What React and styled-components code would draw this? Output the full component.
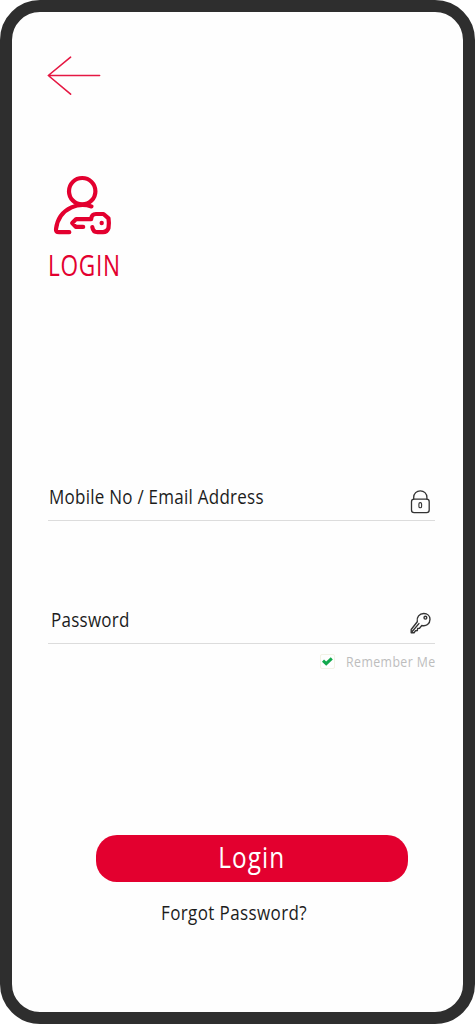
import React, { useState } from "react";
import styled, { createGlobalStyle } from "styled-components";

const GlobalStyle = createGlobalStyle`
  * {
    box-sizing: border-box;
  }
  body {
    margin: 0;
    background: #fff;
    font-family: "Open Sans", "Noto Sans", sans-serif;
  }
`;

const Phone = styled.main`
  width: 475px;
  height: 1024px;
  padding: 44px 28px 0 35px;
  display: flex;
  flex-direction: column;
  align-items: flex-start;
  border: 12px solid #2e2e2e;
  border-radius: 40px;
  background: #fefefe;
  overflow: hidden;
`;

const BackButton = styled.button`
  width: 54px;
  height: 40px;
  padding: 0;
  border: 0;
  background: none;
  cursor: pointer;
`;

const Icon = styled.svg`
  display: block;
  flex: none;
  fill: none;
  stroke: ${({ $color }) => $color || "#333"};
  stroke-width: ${({ $stroke }) => $stroke || 1.4};
  stroke-linecap: round;
  stroke-linejoin: round;
`;

/* the condensed look comes from squeezing the glyphs horizontally */
const Text = styled.span`
  display: block;
  white-space: nowrap;
  font-size: ${({ $size }) => $size}px;
  line-height: ${({ $line }) => $line || 26}px;
  letter-spacing: ${({ $spacing }) => $spacing || 0}px;
  color: ${({ $color }) => $color || "#1c1c1c"};
  transform: scaleX(${({ $squeeze }) => $squeeze || 0.85});
  transform-origin: ${({ $origin }) => $origin || "left"} center;
`;

const Heading = styled.header`
  height: 310px;
  margin: 78px 0 0 1px;
  display: flex;
  flex-direction: column;
`;

const Title = styled.h1`
  margin: 15px 0 0;
  font-weight: 400;
`;

const Field = styled.label`
  width: 387px;
  height: 37px;
  margin: 0 0 ${({ $gap }) => $gap || 0}px 1px;
  padding: 0 ${({ $right }) => $right}px 0 ${({ $left }) => $left}px;
  display: flex;
  justify-content: space-between;
  align-items: flex-start;
  border-bottom: 1px solid #dcdcdc;

  ${Icon} {
    margin-top: ${({ $iconTop }) => $iconTop}px;
  }
`;

const Remember = styled.label`
  width: 389px;
  height: 36px;
  display: flex;
  align-items: center;
  justify-content: flex-end;
  gap: 11px;
  cursor: pointer;
`;

const Checkbox = styled.span`
  width: 15px;
  height: 15px;
  margin-bottom: 2px;
  flex: none;
  display: grid;
  place-items: center;
  border: 1px solid #f3f2e6;
  border-radius: 2px;
`;

const RememberText = styled.span`
  width: 90px;
  margin-bottom: 1px;
`;

const SubmitButton = styled.button`
  width: 312px;
  height: 47px;
  margin: 155px 0 0 49px;
  padding: 0 1px 4px 0;
  display: flex;
  align-items: center;
  justify-content: center;
  border: 0;
  border-radius: 21px;
  background: #e3002f;
  font-family: inherit;
  cursor: pointer;
`;

const ForgotLink = styled.a`
  margin: 18px 0 0 114px;
  text-decoration: none;
`;

const ArrowIcon = () => (
  <Icon width="54" height="40" viewBox="47 56 54 40" $color="#e51843" $stroke={1.6}>
    <path d="M99.6 75.5H48.3M70.6 57.2L48.3 75.5L70.6 94.2" />
  </Icon>
);

const UserKeyIcon = () => (
  <Icon
    width="66"
    height="62"
    viewBox="48 174 66 62"
    $color="#e3002f"
    $stroke={4.2}
  >
    <circle cx="82.2" cy="191.2" r="13.2" />
    <path d="M91.5 206.4C86 204.5 78 204.4 71.5 207.3C61.5 211.8 57 221 56 229C55.7 231.4 56.7 232.2 59 232.2H69.3" />
    <path d="M83.2 226.9H75.8L72.2 223L76.2 219.1H91.2C91.4 215.7 93.2 214 96 214H103.5L108.5 218.4C109 221.5 109 225 108.5 228C107.5 231 106 232.2 103 232.2H97.5C94.5 232.2 92.8 230.5 92.3 227" />
    <circle cx="101.7" cy="223" r="2.2" fill="#e3002f" stroke="none" />
  </Icon>
);

const LockIcon = () => (
  <Icon width="21" height="26" viewBox="410 489 21 26" $stroke={1.3}>
    <rect x="411.5" y="499.2" width="17.7" height="13.5" rx="2.6" />
    <path d="M413.7 499V497.3C413.7 493.5 416.6 490.8 420.3 490.8S426.9 493.5 426.9 497.3V499" />
    <rect x="418.9" y="502.6" width="2.7" height="5.2" rx="1.3" strokeWidth="1.1" />
  </Icon>
);

const KeyIcon = () => (
  <Icon width="22" height="24" viewBox="409 611 22 24">
    <path d="M417.3 621.7C416.3 617 419.5 613.5 423.8 613.5C427.5 613.5 430 616 430 619.3C430 623.7 426.2 626.7 421.8 625.5L419.5 628.2L417.7 628.4L417.3 630.5L415.4 630.8L414 632.8L411.2 632.8L411.2 629.5Z" />
    <path d="M412.2 631.5L418.9 623.6" />
    <circle cx="425.4" cy="617.7" r="1.4" />
  </Icon>
);

const CheckIcon = () => (
  <Icon width="11" height="9" viewBox="0 0 11 9" $color="#12a84b" $stroke={3}>
    <path d="M1 3.6L4.2 6.6L9.8 1.3" strokeLinecap="butt" strokeLinejoin="miter" />
  </Icon>
);

const App = () => {
  const [remember, setRemember] = useState(true);

  return (
    <>
      <GlobalStyle />
      <Phone>
        <BackButton aria-label="Back">
          <ArrowIcon />
        </BackButton>
        <Heading>
          <UserKeyIcon />
          <Title>
            <Text
              $size={29}
              $line={27}
              $squeeze={0.78}
              $spacing={0.9}
              $color="#e3002f"
            >
              LOGIN
            </Text>
          </Title>
        </Heading>
        <Field $left={1} $right={4} $gap={86} $iconTop={5}>
          <Text $size={20} $spacing={0.3}>
            Mobile No / Email Address
          </Text>
          <LockIcon />
        </Field>
        <Field $left={3} $right={4} $iconTop={4}>
          <Text $size={20} $spacing={0.3}>
            Password
          </Text>
          <KeyIcon />
        </Field>
        <Remember onClick={() => setRemember(!remember)}>
          <Checkbox>{remember && <CheckIcon />}</Checkbox>
          <RememberText>
            <Text $size={14.5} $spacing={0.5} $color="#bdbdbd">
              Remember Me
            </Text>
          </RememberText>
        </Remember>
        <SubmitButton>
          <Text
            $size={29}
            $line={27}
            $squeeze={0.84}
            $spacing={1.2}
            $origin="center"
            $color="#fff"
          >
            Login
          </Text>
        </SubmitButton>
        <ForgotLink href="#">
          <Text $size={20} $spacing={0.45}>
            Forgot Password?
          </Text>
        </ForgotLink>
      </Phone>
    </>
  );
};

export default App;
